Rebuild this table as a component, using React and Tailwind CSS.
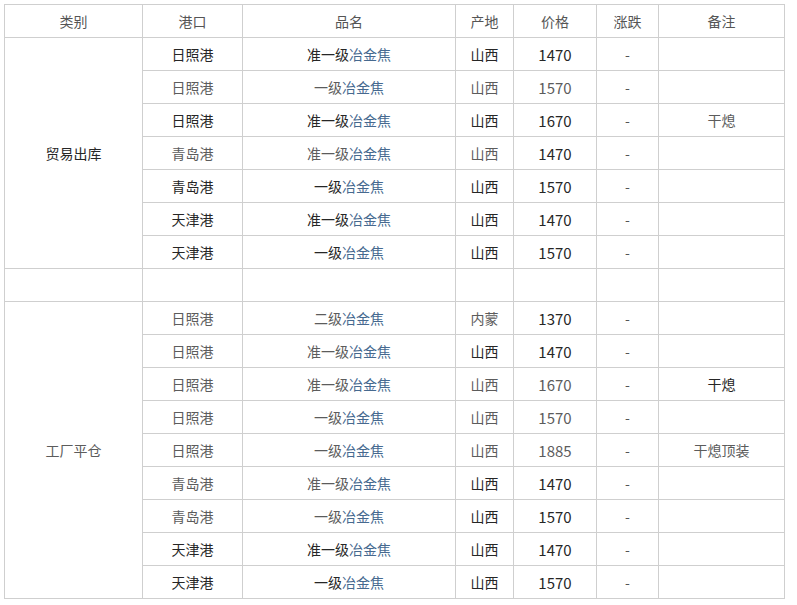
const D = 'text-[#262626]'
const G = 'text-[#5c5c5c]'

// [港口, 等级, 产地, 价格, 备注, 深色标记: 港口/品名/产地/价格/备注]
const trade = [
  ['日照港', '准一级', '山西', '1470', '', '11111'],
  ['日照港', '一级', '山西', '1570', '', '00000'],
  ['日照港', '准一级', '山西', '1670', '干熄', '11110'],
  ['青岛港', '准一级', '山西', '1470', '', '00011'],
  ['青岛港', '一级', '山西', '1570', '', '11111'],
  ['天津港', '准一级', '山西', '1470', '', '11111'],
  ['天津港', '一级', '山西', '1570', '', '11111'],
]

const factory = [
  ['日照港', '二级', '内蒙', '1370', '', '00010'],
  ['日照港', '准一级', '山西', '1470', '', '00110'],
  ['日照港', '准一级', '山西', '1670', '干熄', '00001'],
  ['日照港', '一级', '山西', '1570', '', '00000'],
  ['日照港', '一级', '山西', '1885', '干熄顶装', '00000'],
  ['青岛港', '准一级', '山西', '1470', '', '00110'],
  ['青岛港', '一级', '山西', '1570', '', '00110'],
  ['天津港', '准一级', '山西', '1470', '', '11111'],
  ['天津港', '一级', '山西', '1570', '', '11111'],
]

const cell = 'border border-[#cfcfcf] text-center align-middle p-0 h-[33px]'

function Row({ r, first }) {
  const [port, grade, origin, price, note, flags] = r
  const c = (i) => (flags[i] === '1' ? D : G)
  return (
    <tr>
      {first}
      <td className={`${cell} ${c(0)}`}>{port}</td>
      <td className={`${cell} ${c(1)}`}>
        {grade}
        <span className="text-[#46698f]">冶金焦</span>
      </td>
      <td className={`${cell} ${c(2)}`}>{origin}</td>
      <td className={`${cell} ${c(3)} text-[15px]`}>{price}</td>
      <td className={`${cell} text-[#555]`}>-</td>
      <td className={`${cell} ${c(4)}`}>{note}</td>
    </tr>
  )
}

export default function App() {
  return (
    <div className="w-[797px] h-[605px] bg-white pt-[4px] pl-[4px] overflow-hidden">
      <table
        className="table-fixed border-collapse w-[780px] text-[14px] leading-none"
        style={{ fontFamily: '"Noto Sans CJK SC", "Noto Sans", sans-serif' }}
      >
        <colgroup>
          <col className="w-[138px]" />
          <col className="w-[100px]" />
          <col className="w-[213px]" />
          <col className="w-[58px]" />
          <col className="w-[83px]" />
          <col className="w-[62px]" />
          <col className="w-[126px]" />
        </colgroup>
        <thead>
          <tr className="text-[#555]">
            {['类别', '港口', '品名', '产地', '价格', '涨跌', '备注'].map((h) => (
              <th key={h} className={`${cell} font-normal`}>{h}</th>
            ))}
          </tr>
        </thead>
        <tbody>
          {trade.map((r, i) => (
            <Row
              key={'t' + i}
              r={r}
              first={i === 0 ? <td rowSpan={7} className={`${cell} ${D}`}>贸易出库</td> : null}
            />
          ))}
          <tr>
            {[0, 1, 2, 3, 4, 5, 6].map((k) => (
              <td key={k} className={cell}></td>
            ))}
          </tr>
          {factory.map((r, i) => (
            <Row
              key={'f' + i}
              r={r}
              first={i === 0 ? <td rowSpan={9} className={`${cell} ${G}`}>工厂平仓</td> : null}
            />
          ))}
        </tbody>
      </table>
    </div>
  )
}
